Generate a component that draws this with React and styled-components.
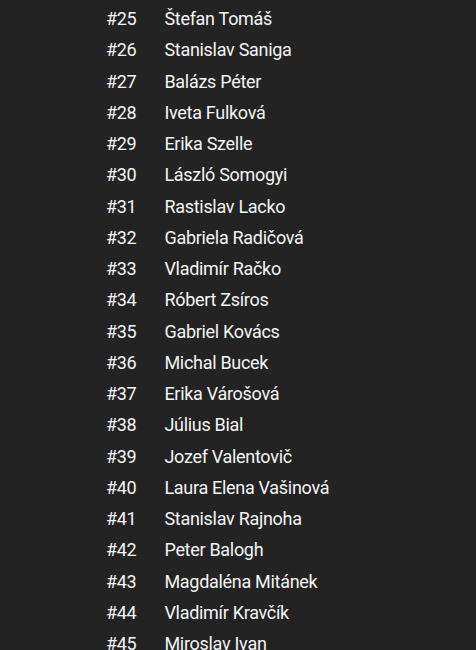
import React from "react";
import styled, { createGlobalStyle } from "styled-components";

const Global = createGlobalStyle`
  html, body { margin: 0; padding: 0; background: #232323; }
  body { font-family: Roboto, "Noto Sans", sans-serif; }
`;

const List = styled.ul`
  list-style: none;
  margin: 0;
  padding: 3px 0 0 106px;
  color: #f4f4f4;
  height: 650px;
  overflow: hidden;
  box-sizing: border-box;
`;

const Row = styled.li`
  display: flex;
  align-items: center;
  height: 31.25px;
  font-size: 18px;
  letter-spacing: -0.3px;
`;

const Num = styled.span`
  margin-right: 28px;
`;

const Name = styled.span``;

const people = [
  "Štefan Tomáš",
  "Stanislav Saniga",
  "Balázs Péter",
  "Iveta Fulková",
  "Erika Szelle",
  "László Somogyi",
  "Rastislav Lacko",
  "Gabriela Radičová",
  "Vladimír Račko",
  "Róbert Zsíros",
  "Gabriel Kovács",
  "Michal Bucek",
  "Erika Várošová",
  "Július Bial",
  "Jozef Valentovič",
  "Laura Elena Vašinová",
  "Stanislav Rajnoha",
  "Peter Balogh",
  "Magdaléna Mitánek",
  "Vladimír Kravčík",
  "Miroslav Ivan",
];

export default function App() {
  return (
    <>
      <Global />
      <List>
        {people.map((p, i) => (
          <Row key={i}>
            <Num>#{25 + i}</Num>
            <Name>{p}</Name>
          </Row>
        ))}
      </List>
    </>
  );
}
